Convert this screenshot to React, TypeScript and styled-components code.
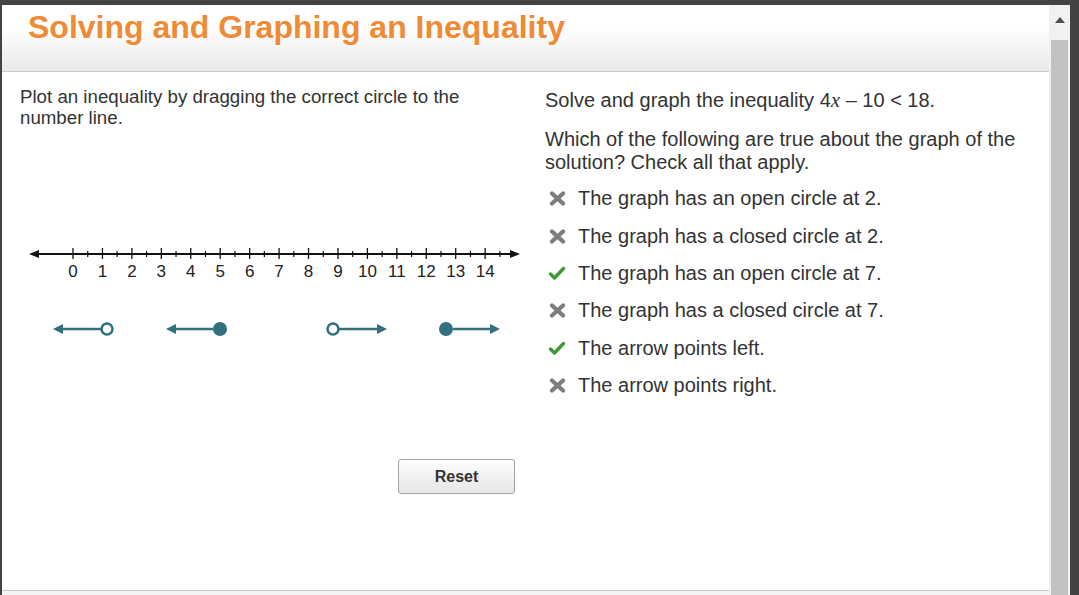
import { FC } from "react"
import styled, { createGlobalStyle } from "styled-components"

const GlobalStyle = createGlobalStyle`
  html, body {
    margin: 0;
    padding: 0;
  }
  body {
    font-family: "Liberation Sans", Arial, sans-serif;
    color: #333;
  }
`

const TEAL = "#31707f"

const Frame = styled.div`
  display: flex;
  height: 595px;
  box-sizing: border-box;
  padding: 5px 9px 0 2px;
  background: #434343;
  overflow: hidden;
`

const Page = styled.div`
  flex: 1;
  display: flex;
  flex-direction: column;
  background: #fff;
  min-width: 0;
`

const Header = styled.header`
  height: 67px;
  padding: 6px 0 0 26px;
  box-sizing: border-box;
  background: linear-gradient(#ffffff 35%, #e9e9e9 100%);
  border-bottom: 1px solid #c9c9c9;
`

const Title = styled.h1`
  margin: 0;
  font-family: "Liberation Sans", Arial, sans-serif;
  font-weight: 700;
  font-size: 32px;
  line-height: 32px;
  color: #ef8a35;
`

const Body = styled.main`
  flex: 1;
  display: flex;
`

const LeftColumn = styled.section`
  width: 530px;
  box-sizing: border-box;
  padding: 14px 17px 0 18px;
  display: flex;
  flex-direction: column;
`

const Prompt = styled.p`
  margin: 0;
  max-width: 480px;
  font-size: 18.7px;
  line-height: 21px;
`

const NumberLineSvg = styled.svg`
  display: block;
  margin-top: 116px;
  overflow: visible;
`

const PieceRow = styled.div`
  display: flex;
  gap: 47px;
  margin: 36px 0 0 30px;
`

const PieceSvg = styled.svg<{ $shift?: number }>`
  display: block;
  margin-left: ${({ $shift = 0 }) => $shift}px;
  cursor: grab;
`

const ButtonRow = styled.div`
  display: flex;
  justify-content: flex-end;
  margin-top: 121px;
`

const ResetButton = styled.button`
  width: 117px;
  height: 35px;
  border: 1px solid #a3a3a3;
  border-radius: 3px;
  background: linear-gradient(#ffffff, #e6e6e6);
  font-family: "Liberation Sans", Arial, sans-serif;
  font-weight: 700;
  font-size: 16px;
  color: #333;
  cursor: pointer;
`

const RightColumn = styled.section`
  flex: 1;
  padding: 17px 10px 0 13px;
`

const Question = styled.p<{ $gap?: number }>`
  margin: 0 0 ${({ $gap = 0 }) => $gap}px;
  font-size: 20px;
  line-height: 23px;
`

const Var = styled.i`
  font-family: "Liberation Serif", "Times New Roman", serif;
  font-size: 21px;
`

const OptionList = styled.ul`
  list-style: none;
  margin: 6px 0 0;
  padding: 0;
`

const Option = styled.li`
  display: flex;
  align-items: center;
  height: 37.4px;
  font-size: 20px;
`

const IconBox = styled.span`
  display: flex;
  width: 20px;
  margin: 0 11px 0 2px;
  justify-content: center;
`

const Footer = styled.div`
  height: 4px;
  background: #f3f3f3;
  border-top: 1px solid #c8c8c8;
`

const Scrollbar = styled.div`
  width: 21px;
  display: flex;
  flex-direction: column;
  background: #f1f1f1;
`

const ScrollArrow = styled.div`
  height: 35px;
  display: flex;
  justify-content: center;
  padding-top: 12px;
  box-sizing: border-box;
`

const ScrollThumb = styled.div`
  flex: 1;
  margin: 0 2px 0 2px;
  background: #c1c1c1;
`

const MAJOR = (v: number) => 53 + v * 29.44

const NumberLine: FC = () => {
  const values = Array.from({ length: 15 }, (_, i) => i)
  const minors = Array.from({ length: 15 }, (_, i) => i + 0.5)
  return (
    <NumberLineSvg width={500} height={40} viewBox="0 0 500 40">
      <line x1={12} y1={10} x2={496} y2={10} stroke="#111" strokeWidth={2} />
      <polygon points="9,10 19,6 19,14" fill="#111" />
      <polygon points="500,10 490,6 490,14" fill="#111" />
      {values.map((v) => (
        <line key={v} x1={MAJOR(v)} y1={4} x2={MAJOR(v)} y2={15} stroke="#111" strokeWidth={1.3} />
      ))}
      {minors.map((v) => (
        <line key={v} x1={MAJOR(v)} y1={7} x2={MAJOR(v)} y2={13} stroke="#111" strokeWidth={1.2} />
      ))}
      {values.map((v) => (
        <text
          key={v}
          x={MAJOR(v)}
          y={33}
          textAnchor="middle"
          fontFamily="Liberation Sans, Arial, sans-serif"
          fontSize={17}
          fill="#222"
        >
          {v}
        </text>
      ))}
    </NumberLineSvg>
  )
}

interface PieceProps {
  arrow: "left" | "right"
  filled?: boolean
  shift?: number
}

const Piece: FC<PieceProps> = ({ arrow, filled, shift }) => {
  const left = arrow === "left"
  const cx = left ? 57 : 9
  const r = filled ? 7 : 5.5
  return (
    <PieceSvg $shift={shift} width={66} height={18} viewBox="0 0 66 18">
      {left ? (
        <>
          <polygon points="3,9 13,4 13,14" fill={TEAL} />
          <line x1={12} y1={9} x2={cx - r} y2={9} stroke={TEAL} strokeWidth={2.5} />
        </>
      ) : (
        <>
          <line x1={cx + r} y1={9} x2={54} y2={9} stroke={TEAL} strokeWidth={2.5} />
          <polygon points="63,9 53,4 53,14" fill={TEAL} />
        </>
      )}
      <circle
        cx={cx}
        cy={9}
        r={r}
        fill={filled ? TEAL : "#fff"}
        stroke={TEAL}
        strokeWidth={filled ? 0 : 2.5}
      />
    </PieceSvg>
  )
}

const CrossIcon: FC = () => (
  <svg width={17} height={15} viewBox="0 0 17 15">
    <path d="M3 2.5 L14 12.5 M14 2.5 L3 12.5" stroke="#7d7d7d" strokeWidth={4.2} strokeLinecap="round" />
  </svg>
)

const CheckIcon: FC = () => (
  <svg width={18} height={15} viewBox="0 0 18 15">
    <path
      d="M2.5 8 L6.5 12 L15.5 2.5"
      fill="none"
      stroke="#3b9a33"
      strokeWidth={3.4}
      strokeLinecap="round"
      strokeLinejoin="round"
    />
  </svg>
)

const options = [
  { text: "The graph has an open circle at 2.", correct: false },
  { text: "The graph has a closed circle at 2.", correct: false },
  { text: "The graph has an open circle at 7.", correct: true },
  { text: "The graph has a closed circle at 7.", correct: false },
  { text: "The arrow points left.", correct: true },
  { text: "The arrow points right.", correct: false },
]

const App: FC = () => (
  <>
    <GlobalStyle />
    <Frame>
      <Page>
        <Header>
          <Title>Solving and Graphing an Inequality</Title>
        </Header>
        <Body>
          <LeftColumn>
            <Prompt>Plot an inequality by dragging the correct circle to the number line.</Prompt>
            <NumberLine />
            <PieceRow>
              <Piece arrow="left" />
              <Piece arrow="left" filled />
              <Piece arrow="right" shift={48} />
              <Piece arrow="right" filled />
            </PieceRow>
            <ButtonRow>
              <ResetButton>Reset</ResetButton>
            </ButtonRow>
          </LeftColumn>
          <RightColumn>
            <Question $gap={16}>
              Solve and graph the inequality 4<Var>x</Var> – 10 &lt; 18.
            </Question>
            <Question>
              Which of the following are true about the graph of the solution? Check all that apply.
            </Question>
            <OptionList>
              {options.map((o) => (
                <Option key={o.text}>
                  <IconBox>{o.correct ? <CheckIcon /> : <CrossIcon />}</IconBox>
                  {o.text}
                </Option>
              ))}
            </OptionList>
          </RightColumn>
        </Body>
        <Footer />
      </Page>
      <Scrollbar>
        <ScrollArrow>
          <svg width={10} height={6} viewBox="0 0 10 6">
            <polygon points="0,6 5,0 10,6" fill="#505050" />
          </svg>
        </ScrollArrow>
        <ScrollThumb />
      </Scrollbar>
    </Frame>
  </>
)

export default App
